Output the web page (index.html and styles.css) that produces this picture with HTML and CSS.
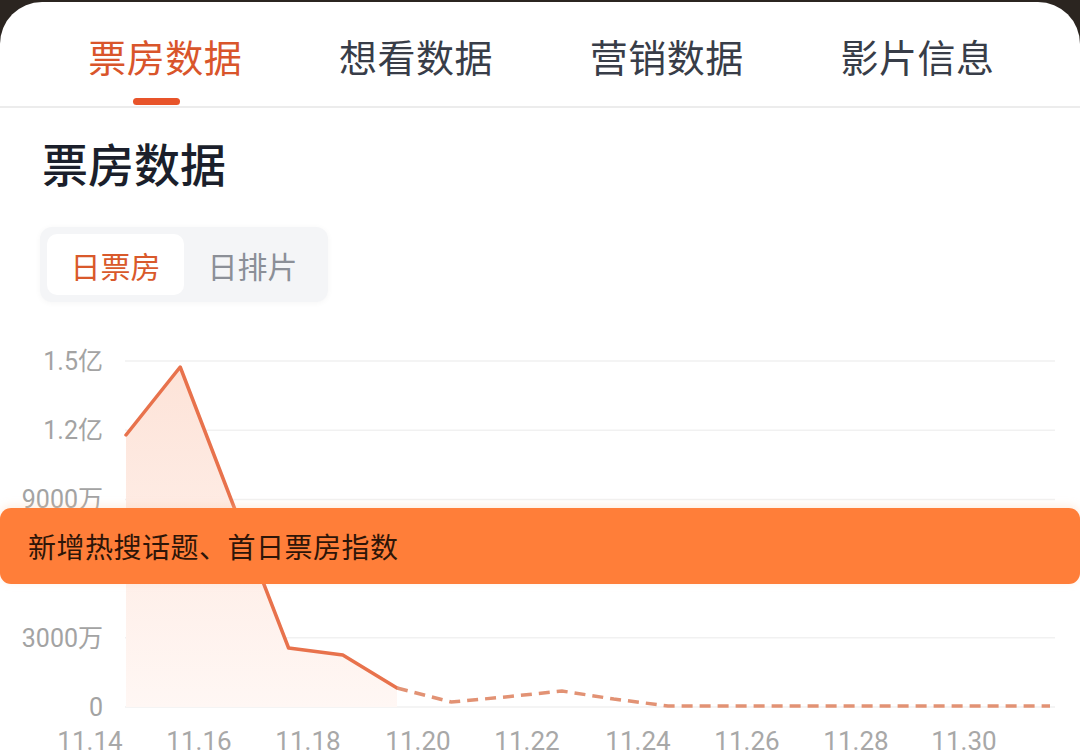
FILE: index.html
```html
<!DOCTYPE html>
<html lang="zh-CN">
<head>
<meta charset="utf-8">
<title>票房数据</title>
<link rel="stylesheet" href="styles.css">
</head>
<body>
<div class="card">
  <nav class="tabs">
    <div class="tab active"><span class="tab-label">票房数据</span><span class="indicator"></span></div>
    <div class="tab"><span class="tab-label">想看数据</span></div>
    <div class="tab"><span class="tab-label">营销数据</span></div>
    <div class="tab"><span class="tab-label">影片信息</span></div>
  </nav>

  <section class="section">
    <h1 class="title">票房数据</h1>
    <div class="segment">
      <div class="seg-item seg-active">日票房</div>
      <div class="seg-item">日排片</div>
    </div>
  </section>

  <div class="chart">
    <svg class="chart-svg" width="1080" height="423" viewBox="0 0 1080 423">
      <defs>
        <linearGradient id="area" x1="0" y1="0" x2="0" y2="1">
          <stop offset="0" stop-color="#fde3d8"/>
          <stop offset="1" stop-color="#fff7f4"/>
        </linearGradient>
      </defs>
      <g class="grid">
        <line x1="125" y1="31" x2="1055" y2="31"/>
        <line x1="125" y1="100.2" x2="1055" y2="100.2"/>
        <line x1="125" y1="169.4" x2="1055" y2="169.4"/>
        <line x1="125" y1="238.6" x2="1055" y2="238.6"/>
        <line x1="125" y1="307.8" x2="1055" y2="307.8"/>
        <line x1="125" y1="377" x2="1055" y2="377"/>
      </g>
      <g class="ylabels">
        <text x="103" y="40">1.5亿</text>
        <text x="103" y="109">1.2亿</text>
        <text x="103" y="178">9000万</text>
        <text x="103" y="247">6000万</text>
        <text x="103" y="317">3000万</text>
        <text x="103" y="386">0</text>
      </g>
      <polygon class="area" points="126,105 180.2,37 234.4,178 288.6,318 342.8,325 397,358 397,377 126,377"/>
      <polyline class="line-solid" points="126,105 180.2,37 234.4,178 288.6,318 342.8,325 397,358"/>
      <polyline class="line-dash" points="397,358 451.2,372 505.4,367 562,361 613.8,369 668,376 1050,376"/>
      <g class="xlabels">
        <text x="90" y="420">11.14</text>
        <text x="199" y="420">11.16</text>
        <text x="308" y="420">11.18</text>
        <text x="418" y="420">11.20</text>
        <text x="527" y="420">11.22</text>
        <text x="638" y="420">11.24</text>
        <text x="747" y="420">11.26</text>
        <text x="856" y="420">11.28</text>
        <text x="964" y="420">11.30</text>
      </g>
    </svg>
  </div>

  <div class="banner">新增热搜话题、首日票房指数</div>
</div>
</body>
</html>
```

FILE: styles.css
```css
* { box-sizing: border-box; }

html, body {
  margin: 0;
  padding: 0;
}

body {
  width: 1080px;
  height: 753px;
  overflow: hidden;
  background: #2b2520;
  font-family: "Noto Sans CJK SC", "Noto Sans", sans-serif;
}

.card {
  position: relative;
  margin-top: 2px;
  height: 751px;
  background: #ffffff;
  border-radius: 42px 42px 0 0;
  overflow: hidden;
}

.tabs {
  display: flex;
  padding: 0 37px 0 40px;
  height: 106px;
  border-bottom: 2px solid #ececec;
}

.tab {
  flex: 1;
  display: flex;
  flex-direction: column;
  align-items: center;
  padding-top: 35px;
}

.tab-label {
  font-size: 38px;
  line-height: 38px;
  color: #383d48;
  letter-spacing: 0.5px;
}

.tab.active .tab-label {
  color: #d9552b;
}

.indicator {
  display: block;
  width: 47px;
  height: 7px;
  margin-top: 23px;
  margin-right: 17px;
  border-radius: 4px;
  background: #e8542a;
}

.section {
  padding: 0 0 0 40px;
}

.title {
  margin: 31px 0 0 2px;
  font-size: 46px;
  line-height: 46px;
  font-weight: 500;
  color: #1b1f2b;
}

.segment {
  display: inline-flex;
  margin-top: 42px;
  padding: 7px;
  background: #f4f5f7;
  border-radius: 12px;
  box-shadow: 0 1px 6px rgba(0, 0, 0, 0.04);
}

.seg-item {
  width: 137px;
  height: 61px;
  display: flex;
  align-items: center;
  justify-content: center;
  font-size: 30px;
  color: #8b8f97;
  border-radius: 10px;
}

.seg-active {
  background: #ffffff;
  color: #d9592b;
}

.chart {
  margin-top: 28px;
  height: 423px;
}

.chart-svg {
  display: block;
}

.grid line {
  stroke: #f1f1f1;
  stroke-width: 1.5;
}

.ylabels text {
  font-family: "Roboto", "Noto Sans CJK SC", sans-serif;
  font-size: 25px;
  fill: #a3a3a3;
  text-anchor: end;
}

.xlabels text {
  font-family: "Roboto", "Noto Sans CJK SC", sans-serif;
  font-size: 26px;
  fill: #a8a8a8;
  text-anchor: middle;
}

.area {
  fill: url(#area);
}

.line-solid {
  fill: none;
  stroke: #e8724c;
  stroke-width: 3.5;
  stroke-linejoin: round;
  stroke-linecap: round;
}

.line-dash {
  fill: none;
  stroke: #e29274;
  stroke-width: 3.5;
  stroke-dasharray: 11 7;
}

.banner {
  position: absolute;
  left: 0;
  right: 0;
  top: 506px;
  height: 76px;
  padding-left: 28px;
  display: flex;
  align-items: center;
  background: #ff7e39;
  border-radius: 11px;
  font-size: 28px;
  letter-spacing: 0.5px;
  color: #2e1508;
  box-shadow: 0 -2px 8px rgba(255, 200, 160, 0.35);
}
```
